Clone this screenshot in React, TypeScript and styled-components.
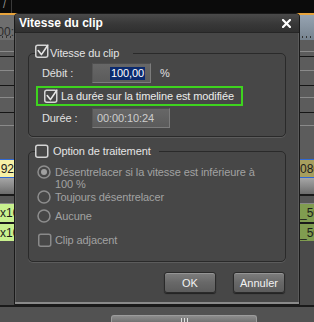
import styled, { createGlobalStyle } from "styled-components";

const GlobalStyle = createGlobalStyle`
  html, body {
    margin: 0;
    padding: 0;
    background: #4a4a4a;
  }
  body {
    font-family: "Liberation Sans", Arial, sans-serif;
  }
`;

const Screen = styled.div`
  position: relative;
  width: 314px;
  height: 322px;
  overflow: hidden;
  display: flex;
  flex-direction: column;
  background: #4a4a4a;
  font-family: "Liberation Sans", Arial, sans-serif;
`;

/* ---------- timeline behind the dialog ---------- */

const TopBar = styled.div`
  height: 13px;
  flex: none;
  background: #0b0b0b;
  display: flex;
`;

const TopTab = styled.div`
  width: 12px;
  box-sizing: border-box;
  border-right: 1px solid #3a3a3a;
  padding-left: 3px;
  color: #9a9a9a;
  font-size: 10px;
  line-height: 9px;
`;

const OrangeLine = styled.div`
  height: 2px;
  flex: none;
  background: #e8a43c;
`;

const Lane = styled.div<{ $h: number; $edge?: string; $top?: string }>`
  height: ${(p) => p.$h}px;
  flex: none;
  display: grid;
  grid-template-columns: 14px 1fr 14px;
  border-top: ${(p) => (p.$top ? `1px solid ${p.$top}` : "none")};
  border-bottom: ${(p) => (p.$edge ? `1px solid ${p.$edge}` : "none")};
`;

const Cell = styled.div<{ $bg: string; $end?: boolean }>`
  background: ${(p) => p.$bg};
  display: flex;
  align-items: center;
  justify-content: ${(p) => (p.$end ? "flex-end" : "flex-start")};
  overflow: hidden;
  white-space: nowrap;
  font-size: 12px;
  color: #1c1c1c;
`;

const RulerCell = styled(Cell)`
  position: relative;
  align-items: flex-start;
  padding-top: 10px;
  color: #2c2c2c;
  &::after {
    content: "";
    position: absolute;
    left: 2px;
    right: 0;
    bottom: 2px;
    height: 2px;
    background: repeating-linear-gradient(
      to right,
      #333 0 1px,
      transparent 1px 4px
    );
  }
`;

const Filler = styled.div`
  flex: 1;
  background: #4a4a4a;
`;

const DarkLine = styled.div`
  height: 2px;
  flex: none;
  background: #1a1a1a;
`;

const BottomBar = styled.div`
  height: 15px;
  flex: none;
  box-sizing: border-box;
  background: #525252;
  padding: 8px 0 0 111px;
  display: flex;
`;

const ScrollThumb = styled.div`
  width: 146px;
  box-sizing: border-box;
  border: 1px solid #9c9c9c;
  border-bottom: none;
  border-radius: 3px 3px 0 0;
  background: linear-gradient(#8c8c8c, #727272);
  display: flex;
  justify-content: center;
  padding-top: 2px;
`;

const Grip = styled.span`
  width: 7px;
  height: 5px;
  background: repeating-linear-gradient(
    to right,
    #e0e0e0 0 1px,
    transparent 1px 3px
  );
`;

/* ---------- dialog ---------- */

const Dialog = styled.div`
  position: absolute;
  left: 14px;
  top: 13px;
  width: 286px;
  height: 292px;
  box-sizing: border-box;
  border: 1px solid #1a1a1a;
  border-radius: 4px 4px 0 0;
  background: #474747;
  box-shadow: inset 0 -2px 0 #8a8a8a, inset 1px 0 0 #5a5a5a,
    inset -1px 0 0 #5a5a5a;
  display: flex;
  flex-direction: column;
  color: #e2e2e2;
  font-size: 11px;
  letter-spacing: -0.1px;
`;

const TitleBar = styled.div`
  height: 19px;
  flex: none;
  box-sizing: border-box;
  display: flex;
  align-items: center;
  justify-content: space-between;
  padding: 0 8px 0 4px;
  border-radius: 3px 3px 0 0;
  border-bottom: 1px solid #262626;
  background: linear-gradient(#4a4a4a, #383838 55%, #303030);
`;

const Title = styled.span`
  color: #ffffff;
  font-weight: bold;
  font-size: 12px;
  letter-spacing: 0;
`;

const Body = styled.div`
  flex: 1;
  display: flex;
  flex-direction: column;
  padding: 13px 13px 0;
`;

const Group = styled.fieldset<{ $gapTop?: number; $padBottom: number }>`
  margin: ${(p) => p.$gapTop ?? 0}px 0 0;
  padding: 3px 10px ${(p) => p.$padBottom}px 6px;
  border: 1px solid #2a2a2a;
  border-radius: 5px;
  box-shadow: 0 1px 0 #5c5c5c;
  display: flex;
  flex-direction: column;
  min-width: 0;
`;

const Legend = styled.legend<{ $gap: number; $trail: number; $lift: number }>`
  padding: 0 ${(p) => p.$trail}px 0 0;
  display: flex;
  align-items: center;
  gap: ${(p) => p.$gap}px;
  height: 14px;
  line-height: 14px;
  color: #e4e4e4;
  & > svg {
    margin-bottom: ${(p) => p.$lift}px;
  }
`;

const FieldRow = styled.div`
  display: flex;
  align-items: center;
  height: 20px;
  padding-left: 7px;
`;

const FieldLabel = styled.span`
  width: 50px;
  flex: none;
  color: #e0e0e0;
`;

const Field = styled.div<{ $w: number; $right?: boolean }>`
  width: ${(p) => p.$w}px;
  height: 20px;
  box-sizing: border-box;
  background: linear-gradient(#676767, #5b5b5b);
  border: 1px solid #7c7c7c;
  border-top-color: #4e4e4e;
  border-left-color: #565656;
  display: flex;
  align-items: center;
  justify-content: ${(p) => (p.$right ? "flex-end" : "flex-start")};
  padding: ${(p) => (p.$right ? "0 5px 0 0" : "0 0 0 4px")};
  color: #cdcdcd;
`;

const Selected = styled.span`
  background: #0b2a6e;
  color: #ffffff;
  line-height: 13px;
  padding: 0 1px;
`;

const Unit = styled.span`
  margin-left: 9px;
  color: #e0e0e0;
`;

const Highlight = styled.div`
  align-self: flex-start;
  height: 20px;
  box-sizing: border-box;
  margin: 3px 0 2px 1px;
  border: 2px solid #3ed41e;
  display: flex;
  align-items: center;
  gap: 3px;
  padding: 0 7px 0 6px;
  color: #ececec;
`;

const OptionRow = styled.div<{ $mt: number; $indent: number; $gap: number }>`
  display: flex;
  align-items: flex-start;
  gap: ${(p) => p.$gap}px;
  margin-top: ${(p) => p.$mt}px;
  padding-left: ${(p) => p.$indent}px;
  color: #a2a2a2;
  line-height: 14px;
`;

const OptionText = styled.span`
  line-height: 12px;
  padding-top: 1px;
`;

const Buttons = styled.div`
  display: flex;
  justify-content: flex-end;
  gap: 17px;
  margin-top: 10px;
  padding-right: 1px;
`;

const Button = styled.button`
  width: 52px;
  height: 21px;
  box-sizing: border-box;
  padding: 0;
  border: 1px solid #2a2a2a;
  border-radius: 3px;
  background: linear-gradient(#7e7e7e, #686868 50%, #5c5c5c);
  box-shadow: inset 0 1px 0 #959595, 0 1px 1px rgba(0, 0, 0, 0.55);
  color: #f2f2f2;
  font-family: "Liberation Sans", Arial, sans-serif;
  font-size: 11px;
`;

const CheckBox = ({ checked, disabled }: { checked?: boolean; disabled?: boolean }) => (
  <svg width="14" height="14" viewBox="0 0 14 14" style={{ flex: "none" }}>
    <rect
      x="0.75"
      y="1.25"
      width="12"
      height="12"
      rx="2"
      fill="none"
      stroke={disabled ? "#8a8a8a" : "#d4d4d4"}
      strokeWidth="1.5"
    />
    {checked && (
      <path
        d="M3.2 6.6 L6.4 10.6 L12.8 1.2"
        fill="none"
        stroke="#e6e6e6"
        strokeWidth="1.6"
        strokeLinecap="round"
        strokeLinejoin="round"
      />
    )}
  </svg>
);

const Radio = ({ checked }: { checked?: boolean }) => (
  <svg width="14" height="14" viewBox="0 0 14 14" style={{ flex: "none" }}>
    <circle cx="7" cy="7" r="6" fill="none" stroke="#8e8e8e" strokeWidth="1.5" />
    {checked && <circle cx="7" cy="7" r="3" fill="#a0a0a0" />}
  </svg>
);

const CloseIcon = () => (
  <svg width="9" height="9" viewBox="0 0 9 9">
    <path d="M1 1 L8 8 M8 1 L1 8" stroke="#ffffff" strokeWidth="2.2" strokeLinecap="square" />
  </svg>
);

const tracks = [
  { h: 11, edge: "#8a8a8a" },
  { h: 4, edge: "#151515" },
  { h: 13, edge: "#8a8a8a" },
  { h: 14, edge: "#151515" },
  { h: 11, edge: "#8a8a8a" },
  { h: 14, edge: "#151515" },
  { h: 12, edge: "#8a8a8a" },
  { h: 33 },
];

export default function App() {
  return (
    <>
      <GlobalStyle />
      <Screen>
        <TopBar>
          <TopTab>/</TopTab>
        </TopBar>
        <OrangeLine />
        <Lane $h={25}>
          <RulerCell $bg="#6e6e6e" $end>
            00:
          </RulerCell>
          <Cell $bg="#6e6e6e" />
          <RulerCell $bg="linear-gradient(#96a3b1, #76838f)" />
        </Lane>
        {tracks.map((t, i) => (
          <Lane key={i} $h={t.h} $edge={t.edge}>
            <Cell $bg="#5c5c5c" />
            <Cell $bg="#5c5c5c" />
            <Cell $bg="#5c5c5c" />
          </Lane>
        ))}
        <Lane $h={17} $top="#2f68d6" $edge="#2f68d6">
          <Cell $bg="#f6f0a6" $end>
            92
          </Cell>
          <Cell $bg="#f6f0a6" />
          <Cell $bg="#a69e5e">080</Cell>
        </Lane>
        <Lane $h={16}>
          <Cell $bg="linear-gradient(#a6a6a6, #6c6c6c)" />
          <Cell $bg="linear-gradient(#a6a6a6, #6c6c6c)" />
          <Cell $bg="linear-gradient(#a6a6a6, #6c6c6c)" />
        </Lane>
        <DarkLine />
        <Lane $h={7} $edge="#8a8a8a">
          <Cell $bg="#565656" />
          <Cell $bg="#565656" />
          <Cell $bg="#565656" />
        </Lane>
        <Lane $h={18}>
          <Cell $bg="#c8f08e">x10</Cell>
          <Cell $bg="#c8f08e" />
          <Cell $bg="#809c50">_50</Cell>
        </Lane>
        <DarkLine />
        <Lane $h={17}>
          <Cell $bg="#c8f08e">x10</Cell>
          <Cell $bg="#c8f08e" />
          <Cell $bg="#809c50">_50</Cell>
        </Lane>
        <Filler />
        <DarkLine />
        <BottomBar>
          <ScrollThumb>
            <Grip />
          </ScrollThumb>
        </BottomBar>

        <Dialog>
          <TitleBar>
            <Title>Vitesse du clip</Title>
            <CloseIcon />
          </TitleBar>
          <Body>
            <Group $padBottom={8}>
              <Legend $gap={1} $trail={14} $lift={4}>
                <CheckBox checked />
                Vitesse du clip
              </Legend>
              <FieldRow>
                <FieldLabel>Débit :</FieldLabel>
                <Field $w={59} $right>
                  <Selected>100,00</Selected>
                </Field>
                <Unit>%</Unit>
              </FieldRow>
              <Highlight>
                <CheckBox checked />
                La durée sur la timeline est modifiée
              </Highlight>
              <FieldRow>
                <FieldLabel>Durée :</FieldLabel>
                <Field $w={78}>00:00:10:24</Field>
              </FieldRow>
            </Group>

            <Group $gapTop={7} $padBottom={14}>
              <Legend $gap={4} $trail={8} $lift={1}>
                <CheckBox />
                Option de traitement
              </Legend>
              <OptionRow $mt={4} $indent={2} $gap={4}>
                <Radio checked />
                <OptionText>
                  Désentrelacer si la vitesse est inférieure à 100 %
                </OptionText>
              </OptionRow>
              <OptionRow $mt={0} $indent={2} $gap={4}>
                <Radio />
                <span>Toujours désentrelacer</span>
              </OptionRow>
              <OptionRow $mt={5} $indent={2} $gap={4}>
                <Radio />
                <span>Aucune</span>
              </OptionRow>
              <OptionRow $mt={10} $indent={3} $gap={3}>
                <CheckBox disabled />
                <span>Clip adjacent</span>
              </OptionRow>
            </Group>

            <Buttons>
              <Button>OK</Button>
              <Button>Annuler</Button>
            </Buttons>
          </Body>
        </Dialog>
      </Screen>
    </>
  );
}
